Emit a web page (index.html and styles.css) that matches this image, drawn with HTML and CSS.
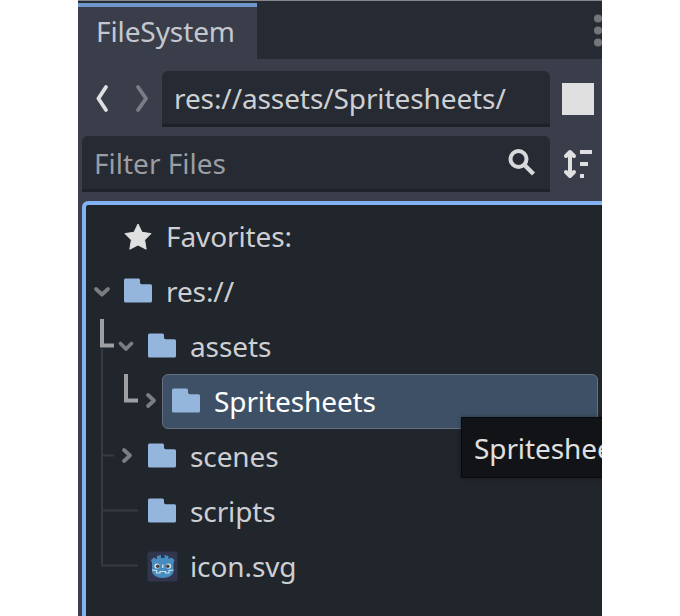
FILE: index.html
```html
<!DOCTYPE html>
<html lang="en">
<head>
<meta charset="utf-8">
<title>FileSystem</title>
<link rel="stylesheet" href="styles.css">
</head>
<body>
<svg width="0" height="0" class="defs">
  <symbol id="folder" viewBox="0 0 28 55"><path d="M1.5 14.5H14.5Q16 14.5 16 16V18.5Q16 20.3 17.8 20.3H26.5Q28 20.3 28 21.8V37Q28 38.5 26.5 38.5H1.5Q0 38.5 0 37V16Q0 14.5 1.5 14.5Z" fill="#94b5dc"/></symbol>
</svg>
<main class="dock">
  <header class="tabs">
    <div class="tab">FileSystem</div>
    <svg class="menu" width="8" height="56" viewBox="0 0 8 56"><g fill="#74767b"><circle cx="4" cy="15.5" r="4"/><circle cx="4" cy="27.5" r="4"/><circle cx="4" cy="39.5" r="4"/></g></svg>
  </header>
  <div class="bar nav">
    <svg class="arrows" width="80" height="56" viewBox="0 0 80 56" fill="none" stroke-width="3.8" stroke-linecap="round" stroke-linejoin="round"><path d="M24 16L16.4 27.5L24 39" stroke="#e0e0e0"/><path d="M56 16L64 27.5L56 39" stroke="#797d86"/></svg>
    <div class="field path">res://assets/Spritesheets/</div>
    <div class="square"></div>
  </div>
  <div class="bar">
    <div class="field filter"><span>Filter Files</span>
      <svg class="search" width="30" height="30" viewBox="0 0 30 30" fill="none" stroke="#d7d8da"><circle cx="11.5" cy="11" r="8" stroke-width="4"/><path d="M17.5 17L26.5 26" stroke-width="4.4"/></svg>
    </div>
    <svg class="sort" width="30" height="30" viewBox="0 0 30 30" fill="#e0e0e0"><path d="M7 4V26M3 7L7 3L11 7M3 23L7 27L11 23" fill="none" stroke="#e0e0e0" stroke-width="4" stroke-linecap="round" stroke-linejoin="round"/><path d="M17 1H29V5H17ZM17 13H25V17H17ZM17 25H21V29H17Z"/></svg>
  </div>
  <section class="tree">
    <div class="row"><svg class="gutter" width="38" height="55"></svg>
      <svg class="icon" width="28" height="55" viewBox="0 0 28 55"><path d="M14 15L18 23.3L27 24.6L20.6 31L22.2 40.2L14 36L5.8 40.2L7.4 31L1 24.6L10 23.3Z" fill="#e0e0e0" stroke="#e0e0e0" stroke-linejoin="round"/></svg><span>Favorites:</span></div>
    <div class="row"><svg class="gutter" width="38" height="55"><path class="chevron" d="M10 25L16 30.5L22 25"/></svg>
      <svg class="icon" width="28" height="55"><use href="#folder"/></svg><span>res://</span></div>
    <div class="row"><svg class="gutter" width="62" height="55"><path class="line" d="M16 30V55"/><path class="elbow" d="M16 0V26.5H28"/><path class="chevron" d="M34.5 24.5L40 30L45.5 24.5"/></svg>
      <svg class="icon" width="28" height="55"><use href="#folder"/></svg><span>assets</span></div>
    <div class="row"><svg class="gutter" width="76" height="55"><path class="line" d="M16 0V55"/><path class="elbow" d="M40 0V26.5H52"/><path class="chevron" d="M62 21L68 26.5L62 32"/></svg>
      <div class="selected"><svg class="icon" width="28" height="55"><use href="#folder"/></svg><span>Spritesheets</span></div></div>
    <div class="row"><svg class="gutter" width="62" height="55"><path class="line" d="M16 0V55M16 26.5H28"/><path class="chevron" d="M38 21L44 26.5L38 32"/></svg>
      <svg class="icon" width="28" height="55"><use href="#folder"/></svg><span>scenes</span></div>
    <div class="row"><svg class="gutter" width="62" height="55"><path class="line" d="M16 0V55M16 26.5H52"/></svg>
      <svg class="icon" width="28" height="55"><use href="#folder"/></svg><span>scripts</span></div>
    <div class="row"><svg class="gutter" width="62" height="55"><path class="line" d="M16 0V26.5H52"/></svg>
      <svg class="icon" width="28" height="55" viewBox="0 0 28 55"><rect x="-.5" y="12.5" width="30" height="30" rx="2.5" fill="#31354e"/><path d="M4 24L3 21L6 18.5L9 20V17L13 16V19H16.5V16L20.5 17V20L23.5 18.5L26.5 21L25.5 24V33Q24 38.5 14.8 39Q5.5 38.5 4 33Z" fill="#478cbf"/><path d="M4 31L8.5 31.5V34H12V32.5H17.5V34H21V31.5L25.5 31" fill="none" stroke="#d0deea" stroke-width="1.2"/><circle cx="9" cy="27" r="2.6" fill="#dfe7ee"/><circle cx="20.5" cy="27" r="2.6" fill="#dfe7ee"/><circle cx="9.7" cy="27.2" r="1.8" fill="#414042"/><circle cx="19.8" cy="27.2" r="1.8" fill="#414042"/><path d="M14.8 25.5V29" stroke="#dfe7ee" stroke-width="1.3"/></svg><span>icon.svg</span></div>
  </section>
  <div class="tooltip">Spritesheets</div>
</main>
</body>
</html>
```
FILE: styles.css
```css
* { box-sizing: border-box; }
body {
  margin: 0;
  background: #fff;
  font: 28px/38px "Noto Sans", sans-serif;
  letter-spacing: -.1px;
  color: #cdcfd2;
}
svg { display: block; flex: none; }
.defs { position: absolute; }
.dock {
  position: relative;
  width: 524px;
  height: 616px;
  margin-left: 78px;
  overflow: hidden;
  background: #3a3e4b;
  white-space: nowrap;
}
.tabs {
  display: flex;
  justify-content: space-between;
  height: 59px;
  padding-top: 2px;
  border-top: 1px solid #85888a;
  background: #262a32;
}
.tab {
  width: 179px;
  height: 56px;
  padding: 5px 0 0 18px;
  border-top: 4px solid #6f97cb;
  background: #3a3e4b;
  color: #c4c8ce;
}
.bar {
  display: flex;
  align-items: center;
  height: 56px;
  margin-bottom: 9px;
  padding-left: 4px;
}
.nav { margin-top: 12px; }
.field {
  display: flex;
  align-items: center;
  height: 56px;
  padding: 0 12px;
  border-bottom: 3px solid #1e2129;
  border-radius: 6px 6px 0 0;
  background: #262a32;
}
.path { width: 388px; }
.filter {
  width: 468px;
  justify-content: space-between;
  letter-spacing: 0;
  color: #9b9da2;
}
.search { margin-right: 1.5px; }
.square { width: 32px; height: 32px; margin-left: 12px; background: #e0e0e0; }
.sort { margin-left: 13px; }
.tree {
  height: 430px;
  margin-left: 4px;
  padding-top: 4px;
  border: solid #82b2f4;
  border-width: 4px 0 0 4px;
  border-radius: 6px 0 0 0;
  background: #21252c;
}
.row, .selected { display: flex; align-items: center; }
.row { height: 55px; }
.row span { padding-bottom: 2px; }
.icon { margin-right: 14px; overflow: visible; }
.gutter { fill: none; }
.line { stroke: #363a41; stroke-width: 2; }
.elbow { stroke: #9d9fa3; stroke-width: 4; }
.chevron {
  stroke: #7b7d81;
  stroke-width: 3.8;
  stroke-linecap: round;
  stroke-linejoin: round;
}
.selected {
  width: 436px;
  height: 55px;
  padding-left: 9px;
  border: 1px solid #65717f;
  border-radius: 6px;
  background: #3e5065;
  color: #fff;
}
.tooltip {
  position: absolute;
  left: 383px;
  top: 417px;
  width: 180px;
  height: 61px;
  padding: 11px 12px;
  border: 1px solid #08090b;
  background: #111316;
  color: #e0e0e0;
  box-shadow: 0 0 5px rgba(0, 0, 0, .3);
}
```
